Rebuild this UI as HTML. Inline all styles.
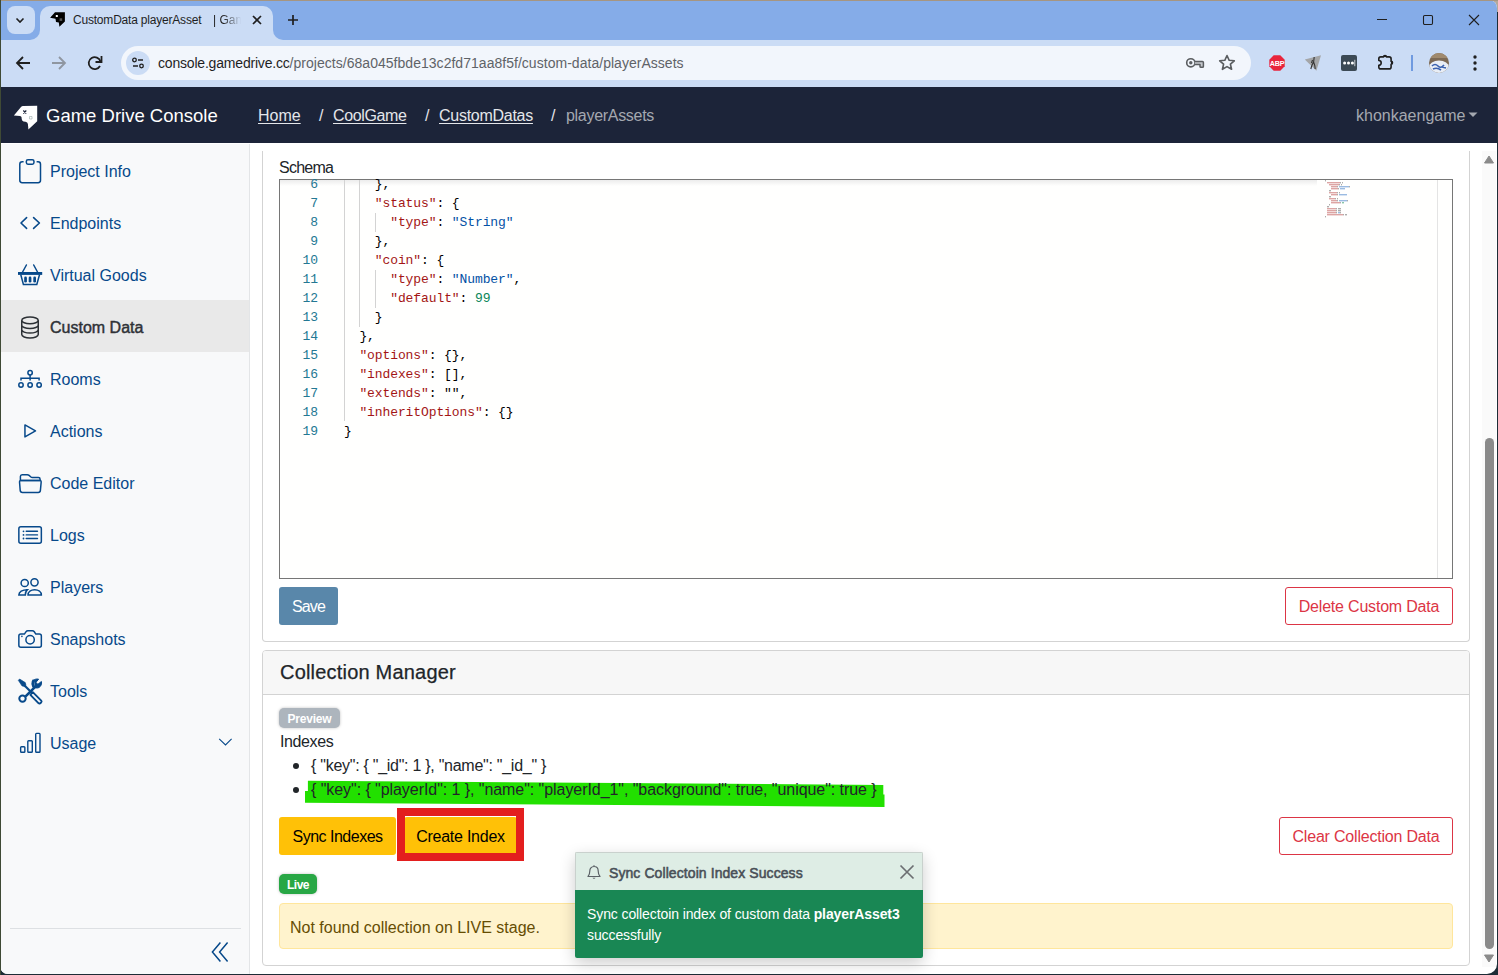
<!DOCTYPE html>
<html><head><meta charset="utf-8">
<style>
*{box-sizing:border-box;margin:0;padding:0}
html,body{width:1498px;height:975px;overflow:hidden;background:#1d2c36;font-family:"Liberation Sans",sans-serif}
.a{position:absolute}
#desk{position:absolute;left:0;top:0;width:1498px;height:2px;background:#9c8b7a}
#win{position:absolute;left:0;top:0;width:1497px;height:974px;background:#fff;overflow:hidden;border-radius:4px 8px 10px 8px}
#tabstrip{position:absolute;left:0;top:0;width:1497px;height:40px;background:#85ace8}
#toolbar{position:absolute;left:0;top:40px;width:1497px;height:47px;background:#cbdcf5}
.tabsearch{left:7px;top:6px;width:28px;height:28px;border-radius:8px;background:#cbdcf5}
.tab{left:40px;top:6px;width:233px;height:34px;background:#cbdcf5;border-radius:10px 10px 0 0}
.tab:before,.tab:after{content:"";position:absolute;bottom:0;width:10px;height:10px;background:transparent}
.tab:before{left:-10px;border-bottom-right-radius:10px;box-shadow:4px 4px 0 4px #cbdcf5}
.tab:after{right:-10px;border-bottom-left-radius:10px;box-shadow:-4px 4px 0 4px #cbdcf5}
.tabtitle{left:73px;top:13px;font-size:12px;line-height:14px;color:#1f1f1f;white-space:nowrap;letter-spacing:-0.2px}
.tabtitle2{left:213px;top:13px;font-size:12px;line-height:14px;color:#1f1f1f;white-space:nowrap;width:30px;overflow:hidden;-webkit-mask-image:linear-gradient(90deg,#000 10px,transparent 28px)}
.omni{left:121px;top:46px;width:1130px;height:34px;border-radius:17px;background:#f2f6fc}
.siteinfo{left:126px;top:51px;width:24px;height:24px;border-radius:12px;background:#cbdcf5}
.url{left:158px;top:55px;font-size:14px;color:#1f1f1f;white-space:nowrap}
.url span{color:#5f6368}
#navbar{position:absolute;left:0;top:87px;width:1497px;height:56px;background:#1c2439}

.brand{left:46px;top:105px;font-size:18.5px;color:#fff;white-space:nowrap}
.crumb{top:107px;font-size:16px;color:#e4e6ea;white-space:nowrap}
.crumb u{text-decoration:underline;text-underline-offset:2px;text-decoration-thickness:1px}
.user{left:1356px;top:107px;font-size:16px;color:#a4a8b0;white-space:nowrap}

#sidebar{position:absolute;left:0;top:144px;width:250px;height:832px;background:#f8f9fa;border-right:1px solid #e3e5e7}
.side{left:50px;font-size:16px;line-height:24px;color:#07498a;white-space:nowrap}
.side.act{color:#2f3237;-webkit-text-stroke:0.45px #2f3237;letter-spacing:0}

.lbl{font-size:16px;line-height:20px;color:#212529;white-space:nowrap}
.lnum{left:290px;width:28px;text-align:right;font-family:"Liberation Mono",monospace;font-size:13px;line-height:19px;letter-spacing:-0.1px;color:#237893}
.cline{left:344px;font-family:"Liberation Mono",monospace;font-size:13px;line-height:19px;letter-spacing:-0.1px;color:#000;white-space:pre}
.btn{font-size:16px;line-height:38px;text-align:center;border-radius:3px;white-space:nowrap}
.h5{font-size:20px;line-height:24px;color:#212529;white-space:nowrap;-webkit-text-stroke:0.25px #212529}
.badge{font-size:12px;line-height:20px;font-weight:bold;color:#fff;text-align:center;border-radius:5px;box-shadow:0 0 3px rgba(0,0,0,.25)}
.li{font-size:16px;line-height:20px;color:#212529;white-space:nowrap}
.toasth{font-size:14px;line-height:20px;color:#495057;white-space:nowrap;-webkit-text-stroke:0.55px #495057}
.toastb{font-size:14px;line-height:21px;color:#fff;white-space:nowrap;letter-spacing:-0.1px}
</style></head>
<body>
<div class="a" style="left:1486px;top:0;width:12px;height:12px;background:#b3a89c"></div>
<div id="win">
  <div id="tabstrip"></div>
  <div class="a tabsearch"></div>
  <svg class="a" style="left:14px;top:14px" width="12" height="12" viewBox="0 0 12 12"><path d="M2.5 4.5 L6 8 L9.5 4.5" fill="none" stroke="#1f1f1f" stroke-width="1.6"/></svg>
  <div class="a tab"></div>
  <svg class="a" style="left:0;top:0" width="80" height="40" viewBox="0 0 80 40"><path d="M50.1 17.8 L55 12.2 H64.9 V21.4 L59.4 26.8 L58.8 22.4 L56 21.9 L55.5 18.8 Z" fill="#000"/><rect x="55.8" y="15" width="2" height="2" fill="#fff"/><rect x="59.6" y="18.3" width="2.6" height="2.6" fill="#555"/></svg>
  <div class="a tabtitle">CustomData playerAsset</div><div class="a tabtitle2">| Game Drive</div>
  <svg class="a" style="left:251px;top:14px" width="12" height="12" viewBox="0 0 12 12"><path d="M2 2 L10 10 M10 2 L2 10" stroke="#1f1f1f" stroke-width="1.7"/></svg>
  <svg class="a" style="left:287px;top:14px" width="12" height="12" viewBox="0 0 12 12"><path d="M6 1 V11 M1 6 H11" stroke="#1f1f1f" stroke-width="1.7"/></svg>
  <!-- window controls -->
  <svg class="a" style="left:1375px;top:13px" width="14" height="14" viewBox="0 0 14 14"><path d="M2 6.5 H12" stroke="#1f1f1f" stroke-width="1.1"/></svg>
  <svg class="a" style="left:1421px;top:13px" width="14" height="14" viewBox="0 0 14 14"><rect x="2.5" y="2.5" width="9" height="9" rx="1.2" fill="none" stroke="#1f1f1f" stroke-width="1.1"/></svg>
  <svg class="a" style="left:1466px;top:12px" width="16" height="16" viewBox="0 0 16 16"><path d="M3 3 L13 13 M13 3 L3 13" stroke="#1f1f1f" stroke-width="1.1"/></svg>

  <div id="toolbar"></div>
  <svg class="a" style="left:13px;top:53px" width="20" height="20" viewBox="0 0 20 20"><path d="M17 10 H4 M10 4 L4 10 L10 16" fill="none" stroke="#1f1f1f" stroke-width="1.8"/></svg>
  <svg class="a" style="left:49px;top:53px" width="20" height="20" viewBox="0 0 20 20"><path d="M3 10 H16 M10 4 L16 10 L10 16" fill="none" stroke="#8f96a0" stroke-width="1.8"/></svg>
  <svg class="a" style="left:85px;top:53px" width="20" height="20" viewBox="0 0 20 20"><path d="M15.5 8.5 A6 6 0 1 0 15 13" fill="none" stroke="#1f1f1f" stroke-width="1.8"/><path d="M16.5 3 V9 H10.5" fill="none" stroke="#1f1f1f" stroke-width="1.8"/></svg>
  <div class="a omni"></div>
  <div class="a siteinfo"></div>
  <svg class="a" style="left:130px;top:55px" width="16" height="16" viewBox="0 0 16 16"><circle cx="4.5" cy="5" r="1.8" fill="none" stroke="#1f1f1f" stroke-width="1.3"/><path d="M8 5 H13" stroke="#1f1f1f" stroke-width="1.4"/><circle cx="11.5" cy="11" r="1.8" fill="none" stroke="#1f1f1f" stroke-width="1.3"/><path d="M3 11 H8" stroke="#1f1f1f" stroke-width="1.4"/></svg>
  <div class="a url"><i style="font-style:normal;letter-spacing:-0.19px">console.gamedrive.cc</i><span style="letter-spacing:0.03px">/projects/68a045fbde13c2fd71aa8f5f/custom-data/playerAssets</span></div>
  <svg class="a" style="left:1185px;top:55px" width="20" height="16" viewBox="0 0 20 16"><circle cx="5.8" cy="7.8" r="4.1" fill="none" stroke="#5a5d60" stroke-width="1.6"/><circle cx="5.8" cy="7.8" r="1.7" fill="#5a5d60"/><path d="M9.8 6.4 H17.4 Q18.4 6.4 18.4 7.4 V11.4 Q18.4 12.3 17.4 12.3 H15.9 Q15 12.3 15 11.4 V9.4 H9.8" fill="#c4c7cc" stroke="#5a5d60" stroke-width="1.5" stroke-linejoin="round"/></svg>
  <svg class="a" style="left:1217px;top:53px" width="20" height="20" viewBox="0 0 20 20"><path d="M10 2.5 L12.2 7.3 L17.3 7.8 L13.4 11.2 L14.6 16.3 L10 13.6 L5.4 16.3 L6.6 11.2 L2.7 7.8 L7.8 7.3 Z" fill="none" stroke="#5a5d60" stroke-width="1.6" stroke-linejoin="round"/></svg>
  <svg class="a" style="left:1269px;top:55px" width="16" height="16" viewBox="0 0 16 16"><path d="M4.7 0.3 H11.3 L15.7 4.7 V11.3 L11.3 15.7 H4.7 L0.3 11.3 V4.7 Z" fill="#e8253c"/><text x="8" y="11" font-family="Liberation Sans" font-weight="bold" font-size="7.2" fill="#fff" text-anchor="middle" letter-spacing="-0.2">ABP</text></svg>
  <svg class="a" style="left:1304px;top:55px" width="18" height="17" viewBox="0 0 18 17"><path d="M0.8 4.6 L17 0.2 L12.4 15.8 Z" fill="#a4a6a8"/><path d="M10.2 2 L9.6 7 L8 10 L6.8 14 M9.6 7 L10.8 10.5 L11.2 14 M8.5 5 L7.5 8" stroke="#333" stroke-width="1.1" fill="none"/></svg>
  <div class="a" style="left:1341px;top:55px;width:16px;height:16px;border-radius:2px;background:#3c4a55"></div>
  <svg class="a" style="left:1341px;top:55px" width="16" height="16" viewBox="0 0 16 16"><circle cx="3.6" cy="8" r="1.5" fill="#fff"/><circle cx="7.5" cy="8" r="1.5" fill="#fff"/><circle cx="11.4" cy="8" r="1.5" fill="#fff"/><path d="M13.8 4.8 V11.2" stroke="#c8cdd2" stroke-width="1"/></svg>
  <svg class="a" style="left:1375px;top:51px" width="20" height="22" viewBox="0 0 20 22"><path d="M5.8 5.9 H8.6 A1.4 1.4 0 0 1 11.4 5.9 H14.1 Q16.1 5.9 16.1 7.9 V10.4 A1.4 1.4 0 0 1 16.1 13.2 V15.9 Q16.1 17.9 14.1 17.9 H5.8 Q3.8 17.9 3.8 15.9 V14.3 A2.4 2.4 0 0 0 3.8 9.5 V7.9 Q3.8 5.9 5.8 5.9 Z" fill="none" stroke="#1f1f1f" stroke-width="1.6" stroke-linejoin="round"/><path d="M8.3 6 A1.7 1.7 0 0 1 11.7 6 Z M16 10.1 A1.7 1.7 0 0 1 16 13.5 Z" fill="#1f1f1f"/></svg>
  <div class="a" style="left:1411px;top:55px;width:2px;height:16px;background:#6f9ae0"></div>
  <svg class="a" style="left:1429px;top:53px" width="20" height="20" viewBox="0 0 20 20"><defs><clipPath id="av"><circle cx="10" cy="10" r="10"/></clipPath></defs><g clip-path="url(#av)"><rect width="20" height="20" fill="#7d6a55"/><ellipse cx="10" cy="14" rx="10" ry="6.5" fill="#e9eef6"/><path d="M3 13 Q6 10 9 13 T15 12 M4 16 Q8 14 12 17 M13 14 L17 15" stroke="#3d63b0" stroke-width="1.6" fill="none"/><rect y="0" width="20" height="5" fill="#a08a6e"/></g></svg>
  <svg class="a" style="left:1467px;top:53px" width="16" height="20" viewBox="0 0 16 20"><circle cx="8" cy="4" r="1.7" fill="#1f1f1f"/><circle cx="8" cy="10" r="1.7" fill="#1f1f1f"/><circle cx="8" cy="16" r="1.7" fill="#1f1f1f"/></svg>

  <div id="navbar"></div>
  <svg class="a" style="left:0;top:0" width="60" height="140" viewBox="0 0 60 140"><path d="M13.9 115.4 L21 107 Q21.8 106.1 23 106.1 L37.2 105.7 V121.3 L28.4 129.5 L27.9 124 Q27.6 122.2 25.5 121.8 L23.5 121.4 Q21.8 121 21.7 119 L21.6 117.6 Q21.4 116.2 20 116 Z" fill="#fff"/><path d="M23.3 110.5 L26.3 113.5 M26.3 110.5 L23.3 113.5" stroke="#1c2439" stroke-width="1.2"/><path d="M29.5 116.5 h2.5 v2.5 h-2.5 z" fill="none" stroke="#9aa" stroke-width="0.6"/></svg>
  <div class="a brand">Game Drive Console</div>
  <div class="a crumb" style="left:258px"><u>Home</u></div>
  <div class="a crumb" style="left:319px">/</div><div class="a crumb" style="left:333px;letter-spacing:-0.38px"><u>CoolGame</u></div>
  <div class="a crumb" style="left:425px">/</div><div class="a crumb" style="left:439px;letter-spacing:-0.27px"><u>CustomDatas</u></div>
  <div class="a crumb" style="left:551px">/</div><div class="a crumb" style="left:566px;color:#a4a8b0;letter-spacing:-0.3px">playerAssets</div>
  <div class="a user">khonkaengame</div>
  <svg class="a" style="left:1468px;top:112px" width="10" height="6" viewBox="0 0 10 6"><path d="M0.5 0.5 H9.5 L5 5 Z" fill="#a4a8b0"/></svg>

  <div id="sidebar"></div>
  <div class="a" style="left:0;top:300px;width:249px;height:52px;background:#e9e9e9"></div>
  <div class="a side" style="top:160px">Project Info</div>
  <div class="a side" style="top:212px">Endpoints</div>
  <div class="a side" style="top:264px">Virtual Goods</div>
  <div class="a side act" style="top:316px">Custom Data</div>
  <div class="a side" style="top:368px">Rooms</div>
  <div class="a side" style="top:420px">Actions</div>
  <div class="a side" style="top:472px">Code Editor</div>
  <div class="a side" style="top:524px">Logs</div>
  <div class="a side" style="top:576px">Players</div>
  <div class="a side" style="top:628px">Snapshots</div>
  <div class="a side" style="top:680px">Tools</div>
  <div class="a side" style="top:732px">Usage</div>
  <svg class="a" style="left:0;top:0" width="249" height="975" viewBox="0 0 249 975" fill="none" stroke="#07498a" stroke-width="1.5">
   <path d="M23.6 161.75 H22.2 A2.4 2.4 0 0 0 19.8 164.15 V180.35 A2.4 2.4 0 0 0 22.2 182.75 H38.1 A2.4 2.4 0 0 0 40.5 180.35 V164.15 A2.4 2.4 0 0 0 38.1 161.75 H36.6"/>
   <rect x="26.35" y="159.65" width="7.6" height="4.5" rx="1.6"/>
   <path d="M26.6 217.6 L21 223 L26.6 228.4 M33.6 217.6 L39.4 223 L33.6 228.4" stroke-width="1.6" stroke-linecap="round" stroke-linejoin="round"/>
   <rect x="18" y="272" width="24.2" height="2.9" fill="#07498a" stroke="none"/>
   <path d="M22.6 272 L26.4 265 M37.5 272 L33.7 265" stroke-linecap="round"/>
   <path d="M20.8 274.8 L23.4 284.5 H36.8 L39.5 274.8"/>
   <rect x="24.2" y="276.6" width="2.7" height="6" rx="1.3" fill="#07498a" stroke="none"/>
   <rect x="28.7" y="276.6" width="2.7" height="6" rx="1.3" fill="#07498a" stroke="none"/>
   <rect x="33.3" y="276.6" width="2.7" height="6" rx="1.3" fill="#07498a" stroke="none"/>
   <g stroke="#2c3035">
    <ellipse cx="30" cy="320.4" rx="8.25" ry="3.3"/>
    <path d="M21.75 320.4 V334.6 A8.25 3.35 0 0 0 38.25 334.6 V320.4 M21.75 325.2 A8.25 3.3 0 0 0 38.25 325.2 M21.75 329.8 A8.25 3.3 0 0 0 38.25 329.8"/>
   </g>
   <circle cx="30.1" cy="372.8" r="2.2"/>
   <path d="M30.1 375 V380.4 M21 380.6 V378.2 H39.1 V380.6"/>
   <circle cx="21" cy="385" r="2.2"/><circle cx="30.1" cy="385" r="2.2"/><circle cx="39.1" cy="385" r="2.2"/>
   <path d="M24.95 424.9 L35.5 430.9 L24.95 436.95 Z" stroke-linejoin="round"/>
   <path d="M20.4 480.4 V476.4 Q20.4 474.65 22.1 474.65 H27.3 Q28.3 474.65 29.1 475.4 L30.6 476.8 Q31.4 477.55 32.4 477.55 H38.4 Q40.1 477.55 40.1 479.2 V480.4 M20.2 480.4 H40.6"/>
   <path d="M19.55 482.2 Q19.5 480.4 21.2 480.4 H39.6 Q41.2 480.4 41.15 482.2 L40.4 490.4 Q40.2 492.45 38.2 492.45 H22.4 Q20.4 492.45 20.2 490.4 Z"/>
   <rect x="18.85" y="526.65" width="22.5" height="16.5" rx="2"/>
   <circle cx="23.5" cy="531.3" r="0.9" fill="#07498a" stroke="none"/><circle cx="23.5" cy="534.9" r="0.9" fill="#07498a" stroke="none"/><circle cx="23.5" cy="538.5" r="0.9" fill="#07498a" stroke="none"/>
   <path d="M26.2 531.3 H37.5 M26.2 534.9 H37.5 M26.2 538.5 H37.5" stroke-width="1.4" stroke-linecap="round"/>
   <circle cx="24.7" cy="583" r="3.6"/><circle cx="34.5" cy="582.3" r="3.6"/>
   <path d="M28.05 595.05 C28.05 591.6 31 589.65 34.7 589.65 C38.4 589.65 41.35 591.6 41.35 595.05 Z"/>
   <path d="M27.4 589.65 C22.3 589.65 18.85 592 18.85 595.05 H25.3 C25.3 592.6 26.1 590.9 27.4 589.65 Z"/>
   <path d="M20.85 634.05 H24.4 L25.9 631.8 Q26.7 630.65 27.9 630.65 H32.3 Q33.5 630.65 34.3 631.8 L35.8 634.05 H39.35 Q41.35 634.05 41.35 636.05 V645.15 Q41.35 647.15 39.35 647.15 H20.85 Q18.85 647.15 18.85 645.15 V636.05 Q18.85 634.05 20.85 634.05 Z"/>
   <circle cx="30.1" cy="639.7" r="4.2"/>
   <circle cx="21.9" cy="636.4" r="0.8" fill="#07498a" stroke="none"/>
   <path d="M18.3 680.3 L19.6 679 L25.3 682.6 L26 685.3 L24.7 686.6 L22 685.9 Z" fill="#07498a" stroke="#07498a" stroke-width="0.6" stroke-linejoin="round"/>
   <path d="M24.5 685.5 L31.8 692.8" stroke-width="2.2"/>
   <path d="M32.8 692.2 L41.2 700.6 Q42 701.6 41.2 702.4 L40.2 703.2 Q39.3 703.9 38.4 703.1 L30.4 694.8 Z" fill="none" stroke-width="1.9" stroke-linejoin="round"/>
   <path d="M34 680 A5 5 0 0 0 34.6 687.4 L25.6 696.4" stroke-width="2.6"/>
   <path d="M34 680 C35.6 678.8 37.6 678.9 38.6 679.2 L35.9 682.4 L37.9 684.3 L41.4 681.5 C42 683.5 41.2 686.3 39 687.5 C37.6 688.2 35.8 688.1 34.6 687.4" fill="#07498a" stroke="#07498a" stroke-width="1" stroke-linejoin="round"/>
   <circle cx="22.5" cy="698.6" r="3.2" stroke-width="2"/>
   <rect x="20.65" y="746.7" width="4.2" height="5.5" rx="0.8" stroke-width="1.4"/>
   <rect x="27.8" y="740.8" width="4.5" height="11.4" rx="0.8" stroke-width="1.4"/>
   <rect x="35.7" y="733.4" width="4.3" height="18.8" rx="0.8" stroke-width="1.4"/>
   <path d="M219.2 738.8 L225.5 744.9 L231.6 738.8" stroke-width="1.1"/>
   <path d="M220.4 942.6 L212.4 952 L220.4 961.4 M227.6 942.6 L219.6 952 L227.6 961.4" stroke-width="1.5"/>
  </svg>
  <div class="a" style="left:10px;top:928px;width:231px;height:1px;background:#dde0e3"></div>

  <!-- main -->
  <div class="a" style="left:262px;top:151px;width:1208px;height:491px;border:1px solid #d3d3d3;border-top:none;border-radius:0 0 4px 4px"></div>
  <div class="a lbl" style="left:279px;top:158px;letter-spacing:-0.75px">Schema</div>
  <div class="a" style="left:279px;top:179px;width:1174px;height:400px;border:1px solid #767676;background:#fffffe;overflow:hidden">
    <div class="a" style="left:0;top:0;width:1037px;height:6px;background:linear-gradient(#ececec,rgba(255,255,255,0))"></div>
    <div class="a" style="left:1157px;top:0;width:1px;height:398px;background:#e4e4e4"></div>
  </div>
  <div class="a" style="left:344px;top:180px;width:1px;height:241px;background:#d3d3d3"></div>
  <div class="a" style="left:359px;top:180px;width:1px;height:147px;background:#d3d3d3"></div>
  <div class="a" style="left:375px;top:213px;width:1px;height:19px;background:#d3d3d3"></div>
  <div class="a" style="left:375px;top:270px;width:1px;height:38px;background:#d3d3d3"></div>
  <div class="a lnum" style="top:175px">6</div>
  <div class="a cline" style="top:175px">    },</div>
  <div class="a lnum" style="top:194px">7</div>
  <div class="a cline" style="top:194px">    <span style="color:#a31515">"status"</span>: {</div>
  <div class="a lnum" style="top:213px">8</div>
  <div class="a cline" style="top:213px">      <span style="color:#a31515">"type"</span>: <span style="color:#0451a5">"String"</span></div>
  <div class="a lnum" style="top:232px">9</div>
  <div class="a cline" style="top:232px">    },</div>
  <div class="a lnum" style="top:251px">10</div>
  <div class="a cline" style="top:251px">    <span style="color:#a31515">"coin"</span>: {</div>
  <div class="a lnum" style="top:270px">11</div>
  <div class="a cline" style="top:270px">      <span style="color:#a31515">"type"</span>: <span style="color:#0451a5">"Number"</span>,</div>
  <div class="a lnum" style="top:289px">12</div>
  <div class="a cline" style="top:289px">      <span style="color:#a31515">"default"</span>: <span style="color:#098658">99</span></div>
  <div class="a lnum" style="top:308px">13</div>
  <div class="a cline" style="top:308px">    }</div>
  <div class="a lnum" style="top:327px">14</div>
  <div class="a cline" style="top:327px">  },</div>
  <div class="a lnum" style="top:346px">15</div>
  <div class="a cline" style="top:346px">  <span style="color:#a31515">"options"</span>: {},</div>
  <div class="a lnum" style="top:365px">16</div>
  <div class="a cline" style="top:365px">  <span style="color:#a31515">"indexes"</span>: [],</div>
  <div class="a lnum" style="top:384px">17</div>
  <div class="a cline" style="top:384px">  <span style="color:#a31515">"extends"</span>: "",</div>
  <div class="a lnum" style="top:403px">18</div>
  <div class="a cline" style="top:403px">  <span style="color:#a31515">"inheritOptions"</span>: {}</div>
  <div class="a lnum" style="top:422px">19</div>
  <div class="a cline" style="top:422px">}</div>

  <svg class="a" style="left:0;top:0" width="1498" height="975" viewBox="0 0 1498 975" opacity="0.6"><rect x="1325" y="180" width="1" height="1.4" fill="#777"/><rect x="1327" y="182" width="13" height="1.4" fill="#c86a6a"/><rect x="1340" y="182" width="1" height="1.4" fill="#777"/><rect x="1342" y="182" width="1" height="1.4" fill="#777"/><rect x="1329" y="184" width="10" height="1.4" fill="#c86a6a"/><rect x="1339" y="184" width="1" height="1.4" fill="#777"/><rect x="1341" y="184" width="1" height="1.4" fill="#777"/><rect x="1331" y="186" width="6" height="1.4" fill="#c86a6a"/><rect x="1337" y="186" width="1" height="1.4" fill="#777"/><rect x="1339" y="186" width="10" height="1.4" fill="#5a8fd0"/><rect x="1349" y="186" width="1" height="1.4" fill="#777"/><rect x="1331" y="188" width="7" height="1.4" fill="#c86a6a"/><rect x="1338" y="188" width="1" height="1.4" fill="#777"/><rect x="1340" y="188" width="5" height="1.4" fill="#5a8fd0"/><rect x="1329" y="190" width="2" height="1.4" fill="#777"/><rect x="1329" y="192" width="8" height="1.4" fill="#c86a6a"/><rect x="1337" y="192" width="1" height="1.4" fill="#777"/><rect x="1339" y="192" width="1" height="1.4" fill="#777"/><rect x="1331" y="194" width="6" height="1.4" fill="#c86a6a"/><rect x="1337" y="194" width="1" height="1.4" fill="#777"/><rect x="1339" y="194" width="8" height="1.4" fill="#5a8fd0"/><rect x="1329" y="196" width="2" height="1.4" fill="#777"/><rect x="1329" y="198" width="6" height="1.4" fill="#c86a6a"/><rect x="1335" y="198" width="1" height="1.4" fill="#777"/><rect x="1337" y="198" width="1" height="1.4" fill="#777"/><rect x="1331" y="200" width="6" height="1.4" fill="#c86a6a"/><rect x="1337" y="200" width="1" height="1.4" fill="#777"/><rect x="1339" y="200" width="8" height="1.4" fill="#5a8fd0"/><rect x="1347" y="200" width="1" height="1.4" fill="#777"/><rect x="1331" y="202" width="9" height="1.4" fill="#c86a6a"/><rect x="1340" y="202" width="1" height="1.4" fill="#777"/><rect x="1342" y="202" width="2" height="1.4" fill="#3aa070"/><rect x="1329" y="204" width="1" height="1.4" fill="#777"/><rect x="1327" y="206" width="2" height="1.4" fill="#777"/><rect x="1327" y="208" width="9" height="1.4" fill="#c86a6a"/><rect x="1336" y="208" width="1" height="1.4" fill="#777"/><rect x="1338" y="208" width="3" height="1.4" fill="#777"/><rect x="1327" y="210" width="9" height="1.4" fill="#c86a6a"/><rect x="1336" y="210" width="1" height="1.4" fill="#777"/><rect x="1338" y="210" width="3" height="1.4" fill="#777"/><rect x="1327" y="212" width="9" height="1.4" fill="#c86a6a"/><rect x="1336" y="212" width="1" height="1.4" fill="#777"/><rect x="1338" y="212" width="2" height="1.4" fill="#5a8fd0"/><rect x="1340" y="212" width="1" height="1.4" fill="#777"/><rect x="1327" y="214" width="16" height="1.4" fill="#c86a6a"/><rect x="1343" y="214" width="1" height="1.4" fill="#777"/><rect x="1345" y="214" width="2" height="1.4" fill="#777"/><rect x="1325" y="216" width="1" height="1.4" fill="#777"/></svg>
  <div class="a btn" style="left:279px;top:587px;width:59px;height:38px;background:#5987aa;color:#fff;line-height:39px;letter-spacing:-0.9px">Save</div>
  <div class="a btn" style="left:1285px;top:587px;width:168px;height:38px;border:1px solid #dc3545;color:#dc3545;letter-spacing:-0.2px">Delete Custom Data</div>

  <div class="a" style="left:262px;top:650px;width:1208px;height:316px;border:1px solid #d3d3d3;border-radius:4px"></div>
  <div class="a" style="left:263px;top:651px;width:1206px;height:44px;background:#f7f7f7;border-bottom:1px solid #d3d3d3;border-radius:3px 3px 0 0"></div>
  <div class="a h5" style="left:280px;top:660px;letter-spacing:0.2px">Collection Manager</div>
  <div class="a badge" style="left:279px;top:708px;width:61px;height:20px;background:#adb5bd;line-height:23px;letter-spacing:-0.2px">Preview</div>
  <div class="a lbl" style="left:280px;top:732px;letter-spacing:-0.4px">Indexes</div>
  <div class="a" style="left:293px;top:763px;width:6px;height:6px;border-radius:3px;background:#212529"></div>
  <div class="a" style="left:293px;top:787px;width:6px;height:6px;border-radius:3px;background:#212529"></div>
  <svg class="a" style="left:0;top:0" width="1498" height="975" viewBox="0 0 1498 975"><path d="M307.9 780.8 L883.3 784.9 V794.6 H884.5 V806.9 L305 802.8 V790.9 H307.9 Z" fill="#22e000"/></svg>
  <div class="a li" style="left:311px;top:756px;letter-spacing:-0.27px">{ "key": { "_id": 1 }, "name": "_id_" }</div>
  <div class="a li" style="left:311px;top:780px;letter-spacing:-0.06px">{ "key": { "playerId": 1 }, "name": "playerId_1", "background": true, "unique": true }</div>
  <div class="a btn" style="left:279px;top:817px;width:117px;height:38px;background:#ffc107;color:#000;line-height:40px;letter-spacing:-0.5px">Sync Indexes</div>
  <div class="a btn" style="left:404px;top:817px;width:113px;height:38px;background:#ffc107;color:#000;line-height:40px;letter-spacing:-0.25px">Create Index</div>
  <div class="a" style="left:397px;top:808px;width:127px;height:53px;border:8px solid #e31e1e"></div>
  <div class="a btn" style="left:1279px;top:817px;width:174px;height:38px;border:1px solid #dc3545;color:#dc3545;letter-spacing:-0.2px">Clear Collection Data</div>
  <div class="a badge" style="left:279px;top:874px;width:38px;height:20px;background:#28a745;line-height:23px;letter-spacing:-0.5px">Live</div>
  <div class="a" style="left:279px;top:903px;width:1174px;height:46px;background:#fff3cd;border:1px solid #ffe69c;border-radius:4px"></div>
  <div class="a lbl" style="left:290px;top:918px;color:#664d03">Not found collection on LIVE stage.</div>

  <!-- toast -->
  <div class="a" style="left:575px;top:852px;width:348px;height:106px;box-shadow:0 5px 16px rgba(0,0,0,.2);border-radius:2px;overflow:hidden">
    <div class="a" style="left:0;top:0;width:348px;height:38px;background:#deede5;border:1px solid #c9d1cd;border-bottom:none"></div>
    <div class="a" style="left:0;top:38px;width:348px;height:68px;background:#198754"></div>
  </div>
  <svg class="a" style="left:587px;top:864px" width="14" height="16" viewBox="0 0 14 16"><path d="M7 1.2 V2.5 M7 2.5 C4.3 2.5 2.8 4.6 2.8 7 C2.8 9.8 2.2 11.2 1 12.5 H13 C11.8 11.2 11.2 9.8 11.2 7 C11.2 4.6 9.7 2.5 7 2.5 Z" fill="none" stroke="#5b6166" stroke-width="1.2" stroke-linejoin="round"/><path d="M5.5 13.8 A1.6 1.6 0 0 0 8.5 13.8" fill="#5b6166"/></svg>
  <div class="a toasth" style="left:609px;top:863px;letter-spacing:0.08px">Sync Collectoin Index Success</div>
  <svg class="a" style="left:899px;top:864px" width="16" height="16" viewBox="0 0 16 16"><path d="M1.5 1.5 L14.5 14.5 M14.5 1.5 L1.5 14.5" stroke="#6c6f72" stroke-width="1.7"/></svg>
  <div class="a toastb" style="left:587px;top:904px">Sync collectoin index of custom data <b>playerAsset3</b><br>successfully</div>

  <!-- page scrollbar -->
  <div class="a" style="left:1482px;top:151px;width:14px;height:816px;background:#fafafa"></div>
  <svg class="a" style="left:1484px;top:155px" width="10" height="9" viewBox="0 0 10 9"><path d="M5 1 L9.5 8 H0.5 Z" fill="#8a8a8a" stroke="#8a8a8a" stroke-width="1" stroke-linejoin="round"/></svg>
  <div class="a" style="left:1485px;top:438px;width:9px;height:511px;border-radius:5px;background:#8a8a8a"></div>
  <svg class="a" style="left:1484px;top:954px" width="10" height="9" viewBox="0 0 10 9"><path d="M0.5 1 H9.5 L5 8 Z" fill="#8a8a8a" stroke="#8a8a8a" stroke-width="1" stroke-linejoin="round"/></svg>
</div>

  <div class="a" style="left:0;top:0;width:1498px;height:1px;background:#a69580"></div>
  <div class="a" style="left:0;top:0;width:1px;height:975px;background:#3f4a35"></div>
</body></html>
